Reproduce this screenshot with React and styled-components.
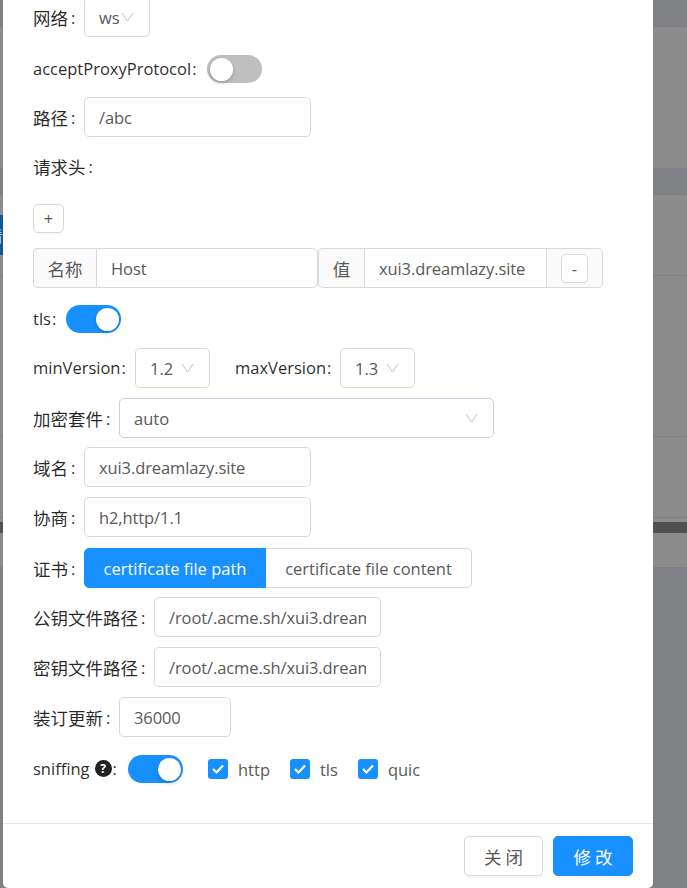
import React from 'react';
import styled, { createGlobalStyle } from 'styled-components';

const Global = createGlobalStyle`
  html, body { margin: 0; padding: 0; height: 100%; overflow: hidden; background: #8c8c8c; }
  #root { height: 100%; }
  * { box-sizing: border-box; }
`;

const LATIN = '"Open Sans", "Noto Sans CJK SC", sans-serif';
const CJK = '"Noto Sans CJK SC", "Open Sans", sans-serif';

const Page = styled.div`
  position: relative;
  width: 687px;
  height: 888px;
  overflow: hidden;
  display: flex;
  flex-direction: column;
`;

const BackRow = styled.div`
  height: ${p => p.$h}px;
  flex: none;
  background: ${p => p.$bg || '#8c8c8c'};
  border-bottom: ${p => (p.$line ? '1px solid #808080' : '0')};
`;

const BackButton = styled.div`
  width: 3px;
  height: 100%;
  background: #0d5a9a;
  overflow: hidden;
  display: flex;
  align-items: center;
  justify-content: flex-end;
  color: #c8d8e8;
  font-family: ${CJK};
  font-size: 15px;
  white-space: nowrap;
`;

const Modal = styled.div`
  position: absolute;
  left: 3px;
  top: 0;
  width: 650px;
  height: 888px;
  background: #fff;
  border-radius: 0 0 5px 5px;
  display: flex;
  flex-direction: column;
  overflow: hidden;
`;

const Body = styled.div`
  flex: 1;
  min-height: 0;
  overflow: hidden;
  padding-left: 30px;
`;

const Form = styled.div`
  margin-top: -3px;
  display: flex;
  flex-direction: column;
`;

const Row = styled.div`
  height: 40px;
  flex: none;
  display: flex;
  align-items: center;
  margin-top: ${p => (p.$gap === undefined ? 10 : p.$gap)}px;
`;

const Label = styled.span`
  flex: none;
  display: inline-flex;
  align-items: center;
  width: ${p => p.$w}px;
  margin-left: ${p => p.$ml || 0}px;
  margin-bottom: ${p => (p.$latin ? '2px' : '0')};
  font-family: ${p => (p.$latin ? LATIN : CJK)};
  font-size: ${p => (p.$latin ? '16.5px' : '17.5px')};
  color: rgba(0, 0, 0, 0.85);
  white-space: nowrap;
`;

const Colon = styled.span`
  font-family: ${LATIN};
  font-size: 16.5px;
  margin-left: ${p => (p.$latin ? 1 : 3)}px;
`;

const Field = styled.input`
  flex: none;
  width: ${p => p.$w}px;
  height: 40px;
  padding: 0 14px;
  border: 1px solid #d9d9d9;
  border-radius: 5px;
  background: #fff;
  outline: none;
  font-family: ${LATIN};
  font-size: 16.5px;
  letter-spacing: -0.1px;
  color: #595959;
`;

const SelectBox = styled.div`
  flex: none;
  width: ${p => p.$w}px;
  height: 40px;
  padding: 0 ${p => p.$pr}px 0 14px;
  border: 1px solid ${p => (p.$focus ? '#c2d2e2' : '#d9d9d9')};
  border-radius: 5px;
  display: flex;
  align-items: center;
  justify-content: space-between;
  font-family: ${LATIN};
  font-size: 16.5px;
  color: #595959;
`;

const Chevron = styled.svg`
  width: 13px;
  height: 10px;
  flex: none;
`;

const Switch = styled.div`
  flex: none;
  position: relative;
  width: 55px;
  height: 28px;
  border-radius: 14px;
  background: ${p => (p.$on ? '#1890ff' : '#bfbfbf')};
`;

const Knob = styled.span`
  position: absolute;
  top: 2.5px;
  left: ${p => (p.$on ? '29.5px' : '2.5px')};
  width: 23px;
  height: 23px;
  border-radius: 50%;
  background: #fff;
  box-shadow: 0 2px 4px rgba(0, 35, 11, 0.2);
`;

const SmallButton = styled.button`
  width: ${p => p.$w}px;
  height: 29px;
  padding: 0;
  border: 1px solid #d9d9d9;
  border-radius: 5px;
  background: #fff;
  box-shadow: 0 2px 0 rgba(0, 0, 0, 0.015);
  font-family: ${LATIN};
  font-size: 16.5px;
  color: #595959;
`;

const Group = styled.div`
  flex: none;
  display: flex;
  height: 40px;
  width: ${p => p.$w}px;
`;

const Addon = styled.div`
  flex: none;
  width: ${p => p.$w}px;
  height: 40px;
  display: flex;
  align-items: center;
  justify-content: center;
  background: #fafafa;
  border: 1px solid #d9d9d9;
  border-left-width: ${p => (p.$end ? 0 : 1)}px;
  border-right-width: ${p => (p.$end ? 1 : 0)}px;
  border-radius: ${p => (p.$end ? '0 5px 5px 0' : '5px 0 0 5px')};
  font-family: ${CJK};
  font-size: 17.5px;
  color: #595959;
`;

const GroupInput = styled(Field)`
  border-radius: ${p => (p.$middle ? 0 : '0 5px 5px 0')};
  min-width: 0;
`;

const RadioGroup = styled.div`
  display: flex;
  height: 40px;
`;

const RadioButton = styled.div`
  flex: none;
  height: 40px;
  width: ${p => p.$w}px;
  display: flex;
  align-items: center;
  justify-content: center;
  font-family: ${LATIN};
  font-size: 16.5px;
  background: ${p => (p.$active ? '#1890ff' : '#fff')};
  color: ${p => (p.$active ? '#fff' : '#595959')};
  border: 1px solid ${p => (p.$active ? '#1890ff' : '#d9d9d9')};
  border-left-width: ${p => (p.$active ? 1 : 0)}px;
  border-radius: ${p => (p.$active ? '5px 0 0 5px' : '0 5px 5px 0')};
`;

const Help = styled.span`
  flex: none;
  width: 17px;
  height: 17px;
  margin-left: 5px;
  border-radius: 50%;
  background: #222;
  color: #fff;
  display: flex;
  align-items: center;
  justify-content: center;
  font-family: ${LATIN};
  font-size: 12px;
  font-weight: 700;
`;

const CheckItem = styled.div`
  flex: none;
  display: flex;
  align-items: center;
  margin-left: ${p => p.$ml}px;
  font-family: ${LATIN};
  font-size: 16.5px;
  color: #595959;
`;

const CheckBox = styled.span`
  flex: none;
  width: 20px;
  height: 20px;
  margin-right: 10px;
  border-radius: 3px;
  background: #1890ff;
  display: flex;
  align-items: center;
  justify-content: center;
`;

const Footer = styled.div`
  flex: none;
  height: 65px;
  border-top: 1px solid #e8e8e8;
  padding: 12px 20px 0 0;
  display: flex;
  justify-content: flex-end;
  gap: 10px;
`;

const FootButton = styled.button`
  width: ${p => p.$w}px;
  height: 40px;
  padding: 0;
  border-radius: 5px;
  border: 1px solid ${p => (p.$primary ? '#1890ff' : '#d9d9d9')};
  background: ${p => (p.$primary ? '#1890ff' : '#fff')};
  color: ${p => (p.$primary ? '#fff' : '#595959')};
  font-family: ${CJK};
  font-size: 17.5px;
  box-shadow: 0 2px 0 rgba(0, 0, 0, 0.03);
`;

const ChevronIcon = () => (
  <Chevron viewBox="0 0 13 10" fill="none" stroke="#c4c4c4" strokeWidth="1">
    <path d="M1 1l5.5 8L12 1" />
  </Chevron>
);

const Check = () => (
  <svg width="14" height="12" viewBox="0 0 14 12" fill="none" stroke="#fff" strokeWidth="2.2">
    <path d="M2 6l3.5 3.5L12 2.5" />
  </svg>
);

const FieldLabel = ({ w, latin, children }) => (
  <Label $w={w} $latin={latin}>
    {children}
    <Colon $latin={latin}>:</Colon>
  </Label>
);

const back = [
  [27, '#808184', 1], [141, '#8c8c8c', 0], [27, '#808184', 1], [20, '#8c8c8c', 0],
  [40, '#8c8c8c', 0, true], [21, '#8c8c8c', 1], [161, '#8c8c8c', 1], [81, '#8c8c8c', 1],
  [4, '#8c8c8c', 0], [11, '#505050', 0], [35, '#8c8c8c', 1], [320, '#808184', 0],
];

export default function App() {
  return (
    <Page>
      <Global />
      {back.map(([h, bg, line, button], i) => (
        <BackRow key={i} $h={h} $bg={bg} $line={line}>
          {button && <BackButton>看</BackButton>}
        </BackRow>
      ))}
      <Modal>
        <Body>
          <Form>
            <Row $gap={0}>
              <FieldLabel w={51}>网络</FieldLabel>
              <SelectBox $w={66} $pr={15}>ws<ChevronIcon /></SelectBox>
            </Row>
            <Row $gap={12}>
              <FieldLabel w={174} latin>acceptProxyProtocol</FieldLabel>
              <Switch><Knob /></Switch>
            </Row>
            <Row $gap={8}>
              <FieldLabel w={51}>路径</FieldLabel>
              <Field $w={227} readOnly value="/abc" />
            </Row>
            <Row $gap={9}>
              <FieldLabel w={100}>请求头</FieldLabel>
            </Row>
            <Row $gap={12}>
              <SmallButton $w={31}>+</SmallButton>
            </Row>
            <Row>
              <Group $w={285}>
                <Addon $w={63}>名称</Addon>
                <GroupInput $w={222} readOnly value="Host" />
              </Group>
              <Group $w={285}>
                <Addon $w={46}>值</Addon>
                <GroupInput $w={183} $middle readOnly value="xui3.dreamlazy.site" />
                <Addon $w={56} $end><SmallButton $w={27}>-</SmallButton></Addon>
              </Group>
            </Row>
            <Row $gap={11}>
              <FieldLabel w={33} latin>tls</FieldLabel>
              <Switch $on><Knob $on /></Switch>
            </Row>
            <Row $gap={9}>
              <FieldLabel w={102} latin>minVersion</FieldLabel>
              <SelectBox $w={75} $pr={15}>1.2<ChevronIcon /></SelectBox>
              <Label $w={105} $ml={25} $latin>maxVersion<Colon $latin>:</Colon></Label>
              <SelectBox $w={75} $pr={15}>1.3<ChevronIcon /></SelectBox>
            </Row>
            <Row>
              <FieldLabel w={86}>加密套件</FieldLabel>
              <SelectBox $w={375} $pr={15} $focus>auto<ChevronIcon /></SelectBox>
            </Row>
            <Row $gap={9}>
              <FieldLabel w={51}>域名</FieldLabel>
              <Field $w={227} readOnly value="xui3.dreamlazy.site" />
            </Row>
            <Row>
              <FieldLabel w={51}>协商</FieldLabel>
              <Field $w={227} readOnly value="h2,http/1.1" />
            </Row>
            <Row $gap={11}>
              <FieldLabel w={51}>证书</FieldLabel>
              <RadioGroup>
                <RadioButton $w={182} $active>certificate file path</RadioButton>
                <RadioButton $w={206}>certificate file content</RadioButton>
              </RadioGroup>
            </Row>
            <Row $gap={9}>
              <FieldLabel w={121}>公钥文件路径</FieldLabel>
              <Field $w={227} readOnly value="/root/.acme.sh/xui3.dreamlazy.site/fullchain.cer" />
            </Row>
            <Row>
              <FieldLabel w={121}>密钥文件路径</FieldLabel>
              <Field $w={227} readOnly value="/root/.acme.sh/xui3.dreamlazy.site/xui3.dreamlazy.site.key" />
            </Row>
            <Row>
              <FieldLabel w={86}>装订更新</FieldLabel>
              <Field $w={112} readOnly value="36000" />
            </Row>
            <Row $gap={12}>
              <Label $w={95} $latin>sniffing<Help>?</Help><Colon $latin>:</Colon></Label>
              <Switch $on><Knob $on /></Switch>
              <CheckItem $ml={25}><CheckBox><Check /></CheckBox>http</CheckItem>
              <CheckItem $ml={20}><CheckBox><Check /></CheckBox>tls</CheckItem>
              <CheckItem $ml={20}><CheckBox><Check /></CheckBox>quic</CheckItem>
            </Row>
          </Form>
        </Body>
        <Footer>
          <FootButton $w={79}>关 闭</FootButton>
          <FootButton $w={80} $primary>修 改</FootButton>
        </Footer>
      </Modal>
    </Page>
  );
}
